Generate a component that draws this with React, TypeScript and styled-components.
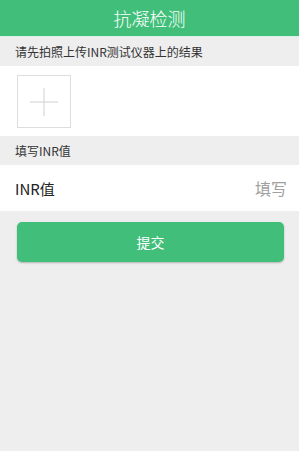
import React from "react";
import styled, { createGlobalStyle } from "styled-components";

const Global = createGlobalStyle`
  html, body { margin: 0; padding: 0; background: #eeeeee; }
  body { font-family: "Noto Sans CJK SC", "Noto Sans", sans-serif; }
  * { box-sizing: border-box; }
`;

const Page = styled.div`
  width: 299px;
  min-height: 451px;
  background: #eeeeee;
  display: flex;
  flex-direction: column;
`;

const Header = styled.div`
  height: 37px;
  background: #41bf7a;
  color: #ffffff;
  font-size: 18px;
  font-weight: 300;
  display: flex;
  align-items: center;
  justify-content: center;
  border-bottom: 1px solid #d9f2e4;
`;

const SectionLabel = styled.div<{ $h: number }>`
  height: ${(p) => p.$h}px;
  padding-left: 15px;
  display: flex;
  align-items: center;
  font-size: 12px;
  color: #333333;
`;

const UploadArea = styled.div`
  background: #ffffff;
  padding: 9px 17px 8px;
  display: flex;
`;

const UploadBox = styled.div`
  width: 54px;
  height: 53px;
  border: 1px solid #dddddd;
  display: flex;
  align-items: center;
  justify-content: center;
`;

const Row = styled.div`
  background: #ffffff;
  height: 46px;
  padding: 0 12px 0 15px;
  display: flex;
  align-items: center;
  justify-content: space-between;
`;

const RowLabel = styled.span`
  font-size: 15px;
  color: #222222;
`;

const RowInput = styled.span`
  font-size: 16px;
  color: #a0a0a0;
`;

const ButtonWrap = styled.div`
  padding: 11px 15px 0 17px;
`;

const SubmitButton = styled.div`
  height: 40px;
  border-radius: 5px;
  background: #41bf7a;
  color: #ffffff;
  font-size: 14px;
  display: flex;
  align-items: center;
  justify-content: center;
  box-shadow: 0 1px 2px rgba(0, 0, 0, 0.25);
`;

export default function App() {
  return (
    <>
      <Global />
      <Page>
        <Header>抗凝检测</Header>
        <SectionLabel $h={29}>请先拍照上传INR测试仪器上的结果</SectionLabel>
        <UploadArea>
          <UploadBox>
            <svg width="30" height="30" viewBox="0 0 30 30">
              <line x1="15" y1="1" x2="15" y2="29" stroke="#d0d0d0" strokeWidth="1" />
              <line x1="1" y1="15" x2="29" y2="15" stroke="#d0d0d0" strokeWidth="1" />
            </svg>
          </UploadBox>
        </UploadArea>
        <SectionLabel $h={29}>填写INR值</SectionLabel>
        <Row>
          <RowLabel>INR值</RowLabel>
          <RowInput>填写</RowInput>
        </Row>
        <ButtonWrap>
          <SubmitButton>提交</SubmitButton>
        </ButtonWrap>
      </Page>
    </>
  );
}
